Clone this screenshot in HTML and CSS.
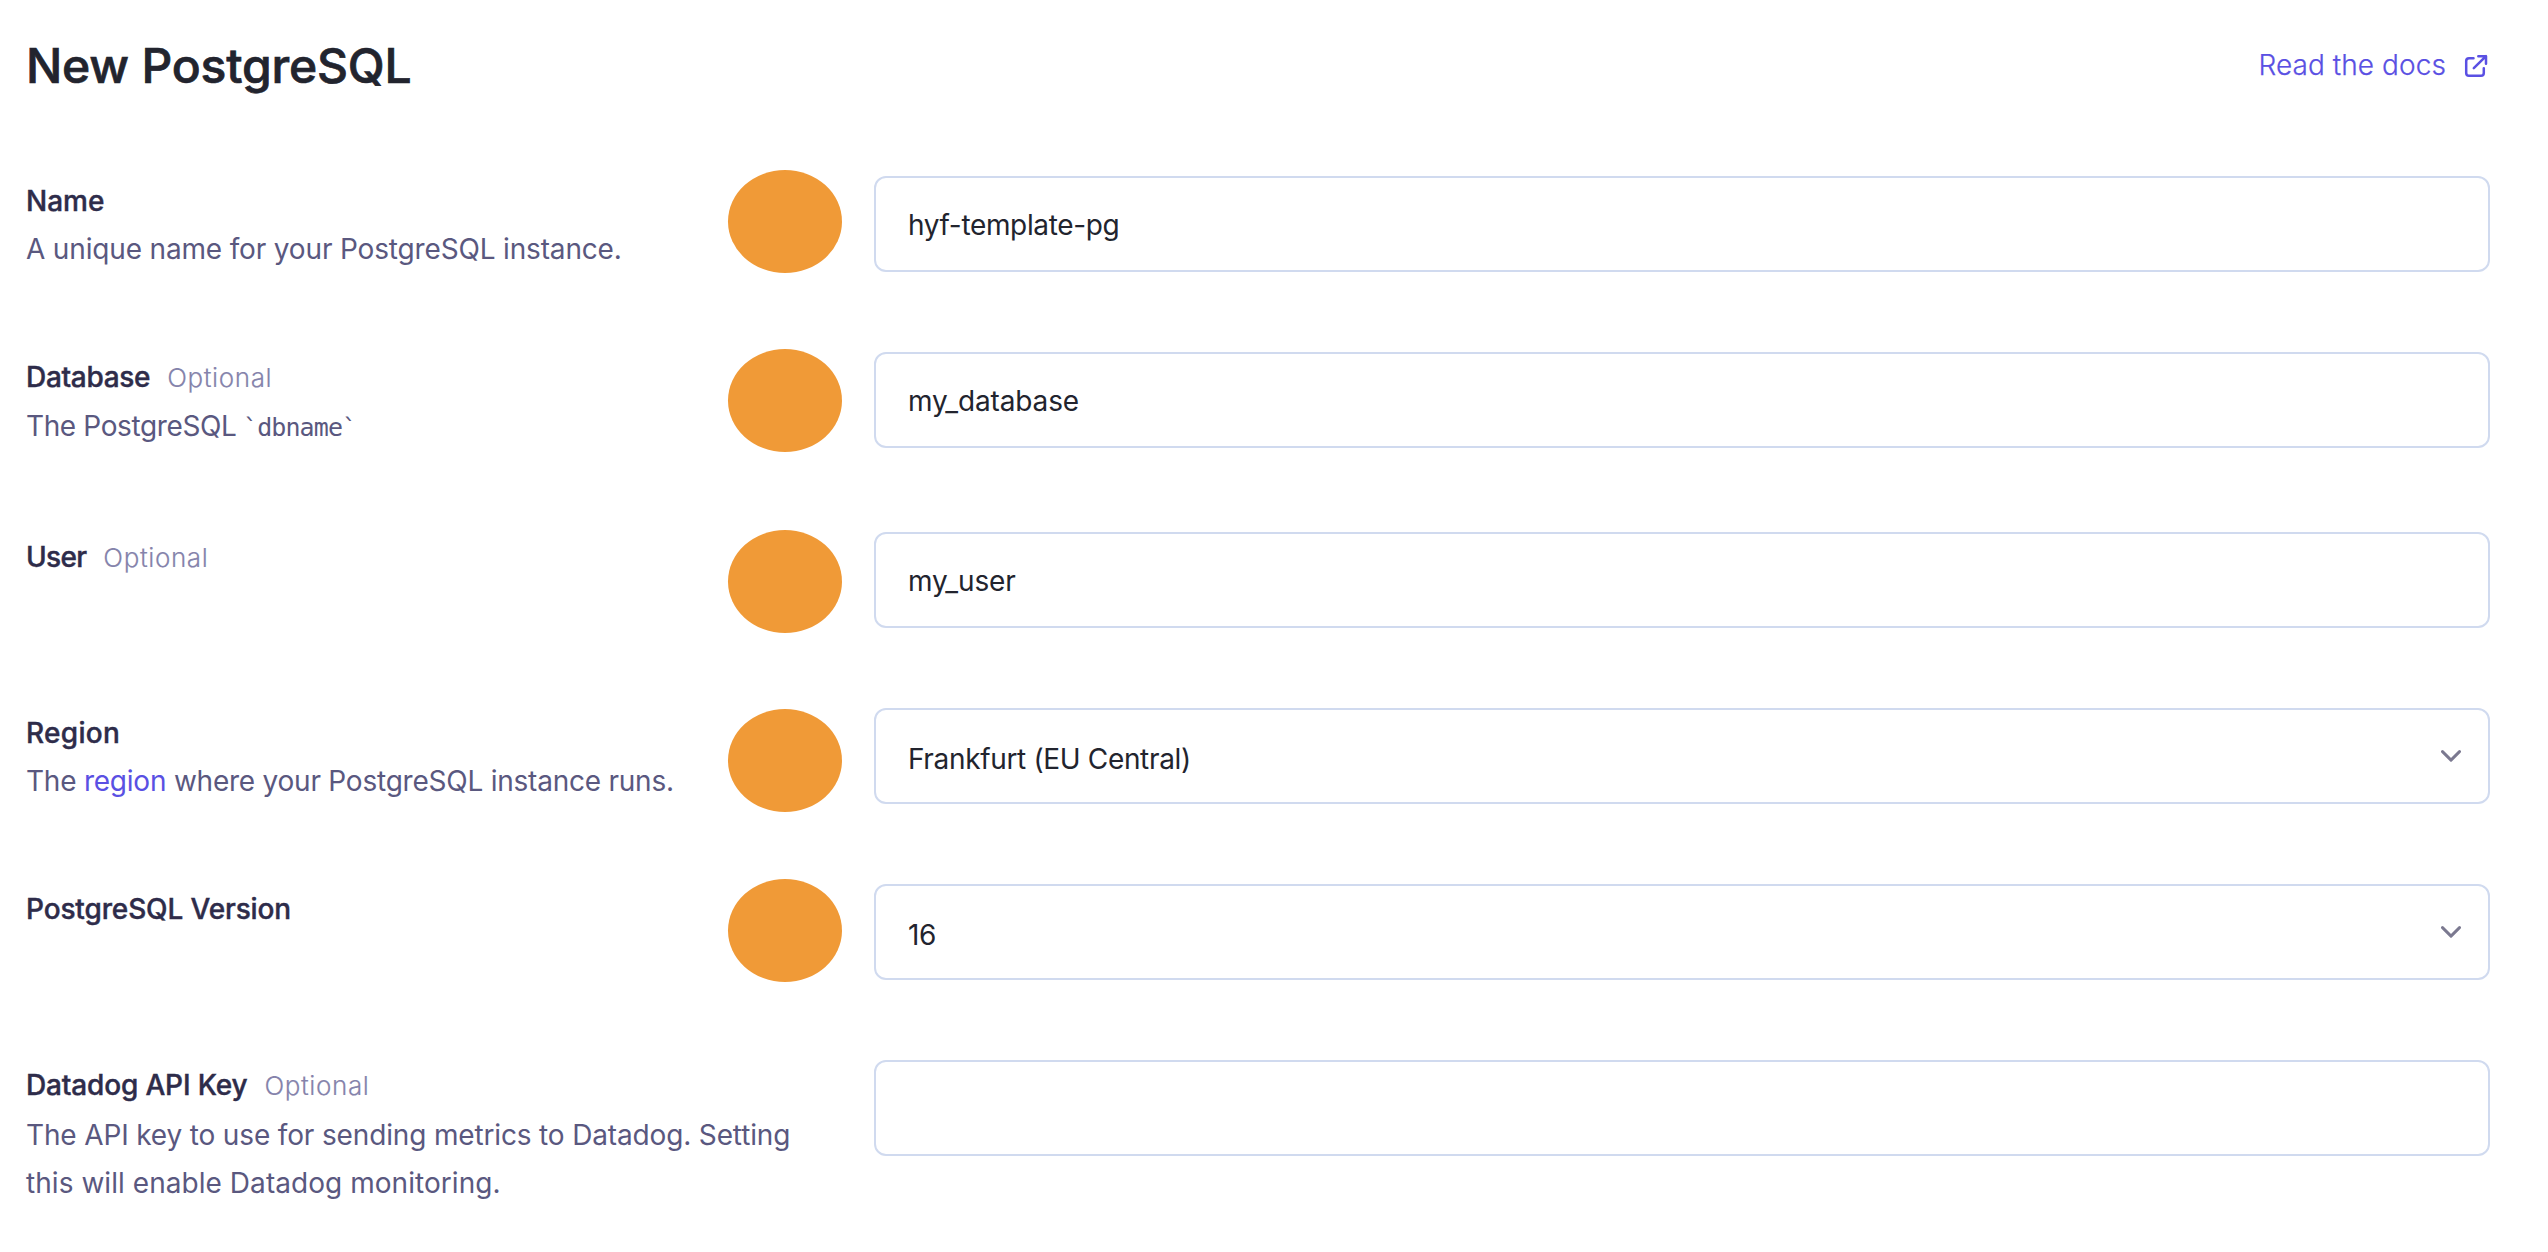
FILE: index.html
```html
<!DOCTYPE html>
<html lang="en">
<head>
<meta charset="utf-8">
<title>New PostgreSQL</title>
<link rel="stylesheet" href="styles.css">
</head>
<body>
<main class="page">
  <header class="header">
    <h1 class="title">New PostgreSQL</h1>
    <a class="docs"><span>Read the docs</span>
      <svg class="docs-icon" viewBox="0 0 24 24" fill="none" stroke="currentColor" stroke-width="2.5" stroke-linecap="round" stroke-linejoin="round"><path d="M9.500 4.200H5a2.800 2.800 0 0 0-2.800 2.800v12A2.800 2.800 0 0 0 5 21.800h12a2.800 2.800 0 0 0 2.800-2.800v-4.700M14.300 2.200H22V9.800M22 2.200 9.800 14.200"/></svg>
    </a>
  </header>

  <form class="form">
    <div class="row">
      <div class="info">
        <div class="label">Name</div>
        <p class="desc desc-name">A unique name for your PostgreSQL instance.</p>
        <span class="dot dot-name"></span>
      </div>
      <div class="field">hyf-template-pg</div>
    </div>

    <div class="row row-tall">
      <div class="info">
        <div class="label label-database">Database<span class="optional">Optional</span></div>
        <p class="desc desc-code">The PostgreSQL <code class="code">`dbname`</code></p>
        <span class="dot dot-database"></span>
      </div>
      <div class="field field-snake">my_database</div>
    </div>

    <div class="row">
      <div class="info">
        <div class="label label-user">User<span class="optional">Optional</span></div>
        <span class="dot dot-user"></span>
      </div>
      <div class="field field-snake">my_user</div>
    </div>

    <div class="row">
      <div class="info">
        <div class="label label-region">Region</div>
        <p class="desc desc-region">The <a class="link">region</a> where your PostgreSQL instance runs.</p>
        <span class="dot dot-region"></span>
      </div>
      <div class="field select">Frankfurt (EU Central)
        <svg class="chevron" viewBox="0 0 20 12" fill="none" stroke="currentColor" stroke-width="2.900" stroke-linecap="round" stroke-linejoin="round"><path d="M1.500 1.600 10 10.100l8.500-8.500"/></svg>
      </div>
    </div>

    <div class="row">
      <div class="info">
        <div class="label label-version">PostgreSQL Version</div>
        <span class="dot dot-version"></span>
      </div>
      <div class="field select">16
        <svg class="chevron" viewBox="0 0 20 12" fill="none" stroke="currentColor" stroke-width="2.900" stroke-linecap="round" stroke-linejoin="round"><path d="M1.500 1.600 10 10.100l8.500-8.500"/></svg>
      </div>
    </div>

    <div class="row row-last">
      <div class="info">
        <div class="label label-key">Datadog API Key<span class="optional">Optional</span></div>
        <p class="desc desc-key">The API key to use for sending metrics to Datadog. Setting <span class="desc-end">this will enable Datadog monitoring.</span></p>
      </div>
      <div class="field"></div>
    </div>
  </form>
</main>
</body>
</html>
```
FILE: styles.css
```css
* { box-sizing: border-box; }

body {
  margin: 0;
  background: #fff;
  font-family: Inter, "Liberation Sans", sans-serif;
  font-size: 28px;
  line-height: 48px;
  color: #22242e;
}

.page {
  min-height: 1252px;
  padding: 35px 58px 0 26px;
}

.header {
  display: flex;
  justify-content: space-between;
  height: 60px;
  margin-bottom: 81px;
}

.title {
  margin: 1px 0 0;
  font-size: 48px;
  font-weight: 500;
  line-height: 60px;
  letter-spacing: -0.2px;
  -webkit-text-stroke: 0.7px currentColor;
}

.docs {
  display: flex;
  align-items: center;
  gap: 18px;
  height: 60px;
  padding-right: 2px;
  color: #5a50e3;
  font-weight: 300;
  letter-spacing: 0.08px;
  -webkit-text-stroke: 0.25px currentColor;
}

.docs-icon {
  width: 24px;
  height: 24px;
  margin-top: 1px;
}

.form {
  display: flex;
  flex-direction: column;
  gap: 80px;
}

.row {
  display: grid;
  grid-template-columns: 848px 1fr;
  align-items: start;
  height: 96px;
}

.row-tall { height: 100px; }
.row-last { height: auto; }

.info {
  position: relative;
  padding-top: 1px;
}

.label {
  display: flex;
  align-items: baseline;
  font-weight: 500;
  letter-spacing: 0;
  color: #2e2c4a;
  -webkit-text-stroke: 0.4px currentColor;
}

.label-database { letter-spacing: -0.32px; }
.label-user { letter-spacing: -0.7px; }
.label-region { letter-spacing: 0.3px; }
.label-version { letter-spacing: -0.14px; }
.label-key { letter-spacing: -0.16px; }

.optional {
  margin-left: 17px;
  font-size: 26px;
  font-weight: 300;
  letter-spacing: 0.6px;
  color: #8583ab;
  -webkit-text-stroke: 0.15px currentColor;
}

.desc {
  max-width: 790px;
  margin: 0;
  color: #5a587f;
  letter-spacing: -0.16px;
}

.desc-code { letter-spacing: -0.38px; }
.desc-region { letter-spacing: -0.23px; }
.desc-key { padding-top: 1px; letter-spacing: -0.15px; }
.desc-end { letter-spacing: 0.05px; }

.code {
  margin-left: -1px;
  font-family: "DejaVu Sans Mono", monospace;
  font-size: 25px;
  line-height: 1;
  letter-spacing: -0.9px;
}

.link { color: #5a50e3; }

.field {
  display: flex;
  align-items: center;
  height: 96px;
  padding: 2px 27px 0 32px;
  border: 2px solid #d0daef;
  border-radius: 12px;
  letter-spacing: -0.34px;
}

.field-snake { letter-spacing: -0.14px; }

.select {
  justify-content: space-between;
  padding-top: 6px;
}

.chevron {
  width: 20px;
  height: 12px;
  margin-bottom: 6px;
  color: #7b7990;
}

/* Orange markers laid over the gap between labels and fields */
.dot {
  position: absolute;
  left: 702px;
  width: 114px;
  height: 103px;
  border-radius: 50%;
  background: #f09a37;
}

.dot-name { top: -6px; }
.dot-database { top: -3px; }
.dot-user { top: -2px; }
.dot-region { top: 1px; }
.dot-version { top: -5px; }
```
